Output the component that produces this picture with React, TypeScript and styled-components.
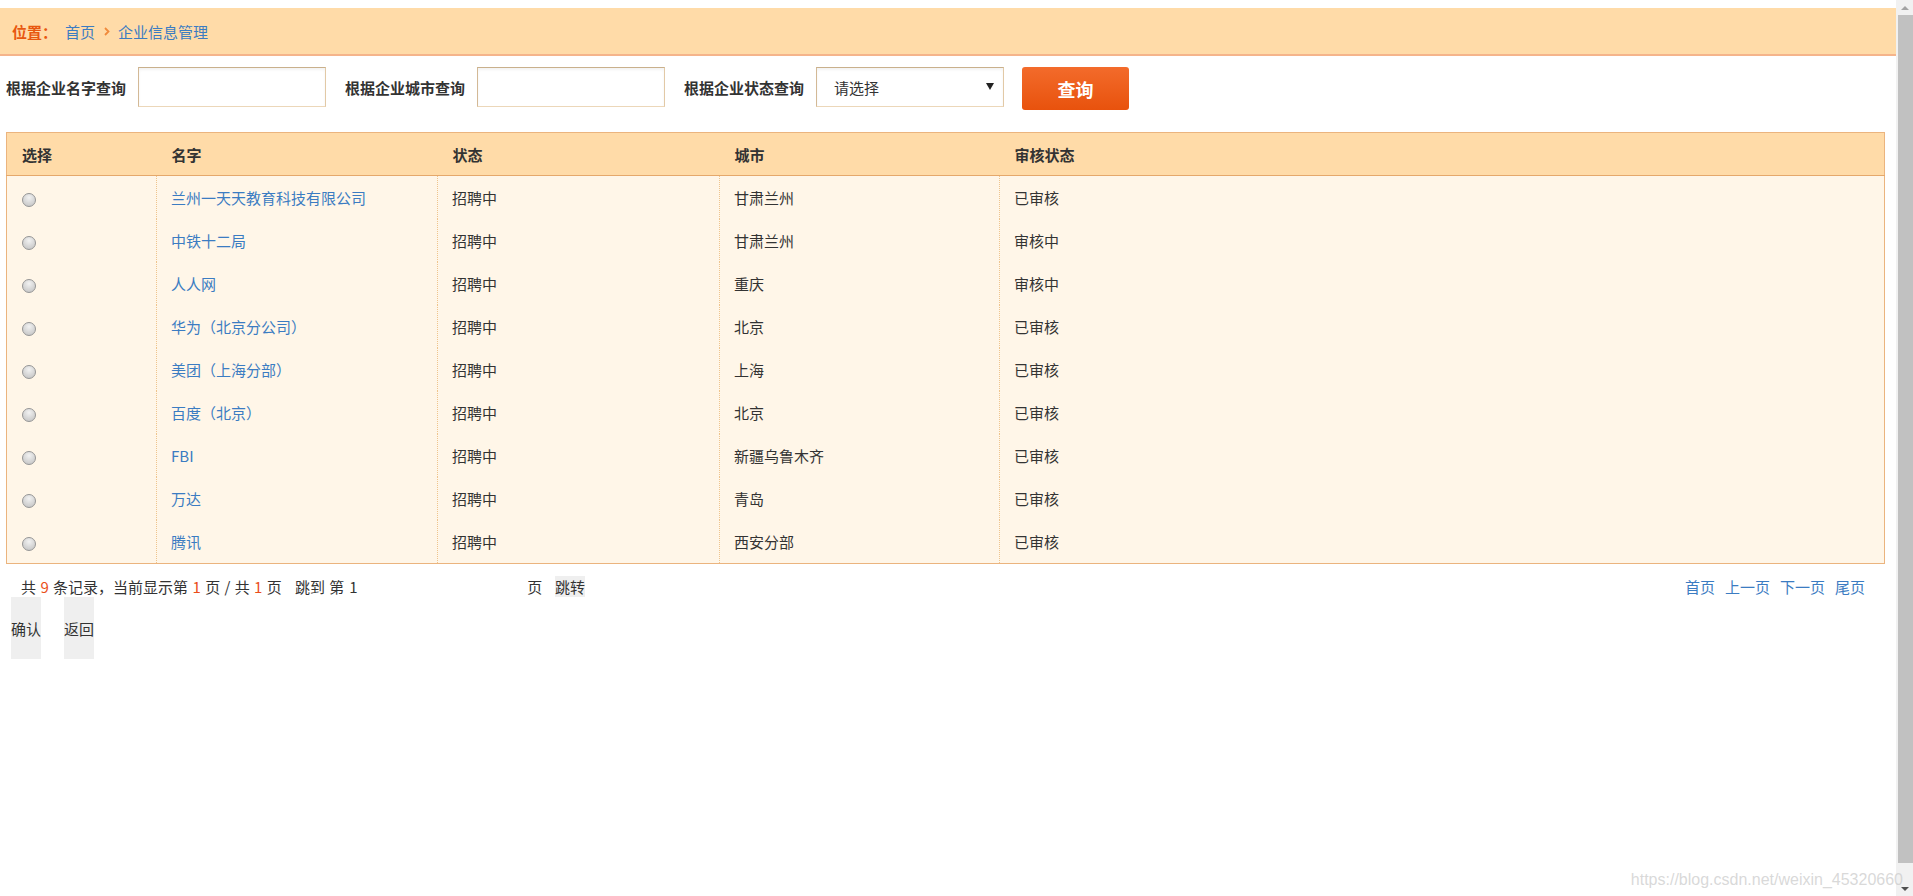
import React from 'react'
import styled, { createGlobalStyle } from 'styled-components'

type Company = {
    name: string,
    status: string,
    city: string,
    audit: string
}

const companies: Company[] = [
    { name: '兰州一天天教育科技有限公司', status: '招聘中', city: '甘肃兰州', audit: '已审核' },
    { name: '中铁十二局', status: '招聘中', city: '甘肃兰州', audit: '审核中' },
    { name: '人人网', status: '招聘中', city: '重庆', audit: '审核中' },
    { name: '华为（北京分公司）', status: '招聘中', city: '北京', audit: '已审核' },
    { name: '美团（上海分部）', status: '招聘中', city: '上海', audit: '已审核' },
    { name: '百度（北京）', status: '招聘中', city: '北京', audit: '已审核' },
    { name: 'FBI', status: '招聘中', city: '新疆乌鲁木齐', audit: '已审核' },
    { name: '万达', status: '招聘中', city: '青岛', audit: '已审核' },
    { name: '腾讯', status: '招聘中', city: '西安分部', audit: '已审核' },
]

const GlobalStyle = createGlobalStyle`
    html, body {
        margin: 0;
        padding: 0;
        height: 100%;
        overflow: hidden;
    }
    body {
        font-family: "Noto Sans CJK SC", "Microsoft YaHei", sans-serif;
        font-size: 15px;
        color: #333;
        background: #fff;
    }
`

const Screen = styled.div`
    position: relative;
    display: grid;
    grid-template-columns: 1fr 17px;
    height: 100vh;
`

const Main = styled.div`
    min-width: 0;
    padding-top: 8px;
`

/* breadcrumb */

const Crumbs = styled.div`
    height: 46px;
    display: flex;
    align-items: center;
    padding-left: 12px;
    background: #ffdba8;
    border-bottom: 2px solid #f5b48b;
`

const CrumbLabel = styled.span`
    color: #e8570f;
    font-weight: bold;
    width: 53px;
`

const CrumbLink = styled.a`
    color: #3b7cc2;
    text-decoration: none;
`

const Chevron = styled.svg`
    width: 6px;
    height: 9px;
    margin: 1px 8px 0 9px;
`

/* search */

const SearchBar = styled.div`
    display: flex;
    align-items: flex-start;
    gap: 19px;
    margin: 11px 0 22px;
    padding-left: 6px;
    height: 43px;
`

const Field = styled.label`
    display: flex;
    align-items: flex-start;
    gap: 12px;
`

const FieldLabel = styled.span`
    font-weight: bold;
    line-height: 42px;
    white-space: nowrap;
`

const boxBorder = `
    box-sizing: border-box;
    height: 40px;
    width: 188px;
    background: #fff;
    border: 1px solid;
    border-color: #c9b08c #e2c9a6 #ecd7b9 #d3b996;
    box-shadow: inset 0 2px 3px rgba(0, 0, 0, 0.05);
`

const TextInput = styled.input`
    ${boxBorder}
    padding: 0 8px;
    font: inherit;
    outline: none;
`

const SelectBox = styled.div`
    ${boxBorder}
    display: flex;
    align-items: center;
    justify-content: space-between;
    padding: 0 9px 0 17px;
    color: #333;
    cursor: default;
`

const SelectArrow = styled.span`
    width: 0;
    height: 0;
    border-left: 4px solid transparent;
    border-right: 4px solid transparent;
    border-top: 7px solid #222;
    margin-top: -2px;
`

const SearchButton = styled.button`
    width: 107px;
    height: 43px;
    margin-left: -1px;
    border: none;
    border-radius: 3px;
    background: linear-gradient(#f36b2b, #e8520d);
    color: #fff;
    font: bold 18px "Noto Sans CJK SC", sans-serif;
    cursor: pointer;
`

/* table */

const Table = styled.table`
    width: calc(100% - 17px);
    margin: 0 11px 0 6px;
    border-collapse: collapse;
    table-layout: fixed;
    border: 1px solid #ebb47e;
`

const HeadCell = styled.th`
    height: 42px;
    padding: 0 0 0 15px;
    text-align: left;
    font-weight: bold;
    background: #ffdba8;
    border-bottom: 1px solid #e5a86b;
`

const Row = styled.tr`
    background: #fff6e8;
`

const Cell = styled.td<{ first?: boolean }>`
    height: 43px;
    padding: 0 0 0 ${p => (p.first ? 15 : 14)}px;
    border-left: ${p => (p.first ? 'none' : '1px dotted #efc48c')};
    white-space: nowrap;
`

const NameLink = styled.a`
    color: #3b7cc2;
    text-decoration: none;
`

const Radio = styled.span`
    display: inline-block;
    vertical-align: middle;
    width: 12px;
    height: 12px;
    margin-top: 1px;
    border-radius: 50%;
    border: 1px solid #969696;
    background: radial-gradient(circle at 50% 30%, #f2f2f2 0%, #d6d6d6 55%, #c0c0c0 100%);
`

/* pager */

const Pager = styled.div`
    display: flex;
    justify-content: space-between;
    align-items: center;
    height: 21px;
    margin-top: 12px;
    padding: 0 31px 0 21px;
    line-height: 21px;
`

const PagerInfo = styled.div`
    display: flex;
    align-items: center;
    white-space: pre;
    word-spacing: 1px;
`

const Num = styled.span`
    color: #ea4e1a;
`

const JumpInput = styled.input`
    width: 178px;
    height: 21px;
    padding: 0 0 0 5px;
    border: none;
    outline: none;
    background: transparent;
    font: inherit;
    color: #333;
`

const GreyButton = styled.button<{ tall?: boolean }>`
    height: ${p => (p.tall ? 62 : 21)}px;
    padding: 0;
    border: none;
    background: #efefef;
    font: inherit;
    color: #333;
    line-height: 21px;
    cursor: pointer;
`

const JumpButton = styled(GreyButton)`
    margin-left: 4px;
`

const PageLinks = styled.div`
    display: flex;
    gap: 10px;
`

const PageLink = styled.a`
    color: #3b7cc2;
    text-decoration: none;
`

const Actions = styled.div`
    display: flex;
    gap: 23px;
    padding-left: 11px;
`

/* fake classic scrollbar */

const ScrollTrack = styled.div`
    display: flex;
    flex-direction: column;
    background: #f1f1f1;
`

const ScrollArrow = styled.div<{ down?: boolean }>`
    height: 15px;
    display: flex;
    align-items: center;
    justify-content: center;
    &::after {
        content: '';
        width: 0;
        height: 0;
        border-left: 4px solid transparent;
        border-right: 4px solid transparent;
        ${p => (p.down ? 'border-top: 4px solid #505050;' : 'border-bottom: 4px solid #a3a3a3;')}
        margin-left: 1px;
    }
`

const ScrollThumb = styled.div`
    height: 848px;
    margin-left: 2px;
    background: #c1c1c1;
`

const ScrollGap = styled.div`
    flex: 1;
`

const Watermark = styled.div`
    position: absolute;
    right: 10px;
    bottom: 6px;
    font: 16px "Liberation Sans", Arial, sans-serif;
    line-height: 20px;
    color: rgba(200, 200, 200, 0.7);
    pointer-events: none;
`

export default function App() {
    return (
        <Screen>
            <GlobalStyle />
            <Main>
                <Crumbs>
                    <CrumbLabel>位置：</CrumbLabel>
                    <CrumbLink href="#">首页</CrumbLink>
                    <Chevron viewBox="0 0 6 9">
                        <polyline points="1,1 4.5,4.5 1,8" fill="none" stroke="#f08a3c" strokeWidth="1.8" />
                    </Chevron>
                    <CrumbLink href="#">企业信息管理</CrumbLink>
                </Crumbs>

                <SearchBar>
                    <Field>
                        <FieldLabel>根据企业名字查询</FieldLabel>
                        <TextInput />
                    </Field>
                    <Field>
                        <FieldLabel>根据企业城市查询</FieldLabel>
                        <TextInput />
                    </Field>
                    <Field>
                        <FieldLabel>根据企业状态查询</FieldLabel>
                        <SelectBox>
                            <span>请选择</span>
                            <SelectArrow />
                        </SelectBox>
                    </Field>
                    <SearchButton>查询</SearchButton>
                </SearchBar>

                <Table>
                    <colgroup>
                        <col style={{ width: 150 }} />
                        <col style={{ width: 281 }} />
                        <col style={{ width: 282 }} />
                        <col style={{ width: 280 }} />
                        <col />
                    </colgroup>
                    <thead>
                        <tr>
                            <HeadCell>选择</HeadCell>
                            <HeadCell>名字</HeadCell>
                            <HeadCell>状态</HeadCell>
                            <HeadCell>城市</HeadCell>
                            <HeadCell>审核状态</HeadCell>
                        </tr>
                    </thead>
                    <tbody>
                        {companies.map(c => (
                            <Row key={c.name}>
                                <Cell first><Radio /></Cell>
                                <Cell><NameLink href="#">{c.name}</NameLink></Cell>
                                <Cell>{c.status}</Cell>
                                <Cell>{c.city}</Cell>
                                <Cell>{c.audit}</Cell>
                            </Row>
                        ))}
                    </tbody>
                </Table>

                <Pager>
                    <PagerInfo>
                        共 <Num>9</Num> 条记录，当前显示第 <Num>1</Num> 页 / 共 <Num>1</Num> 页{'   '}跳到 第
                        <JumpInput defaultValue="1" />
                        页{'  '}<JumpButton>跳转</JumpButton>
                    </PagerInfo>
                    <PageLinks>
                        <PageLink href="#">首页</PageLink>
                        <PageLink href="#">上一页</PageLink>
                        <PageLink href="#">下一页</PageLink>
                        <PageLink href="#">尾页</PageLink>
                    </PageLinks>
                </Pager>

                <Actions>
                    <GreyButton tall>确认</GreyButton>
                    <GreyButton tall>返回</GreyButton>
                </Actions>
            </Main>

            <ScrollTrack>
                <ScrollArrow />
                <ScrollThumb />
                <ScrollGap />
                <ScrollArrow down />
            </ScrollTrack>

            <Watermark>https://blog.csdn.net/weixin_45320660</Watermark>
        </Screen>
    )
}
